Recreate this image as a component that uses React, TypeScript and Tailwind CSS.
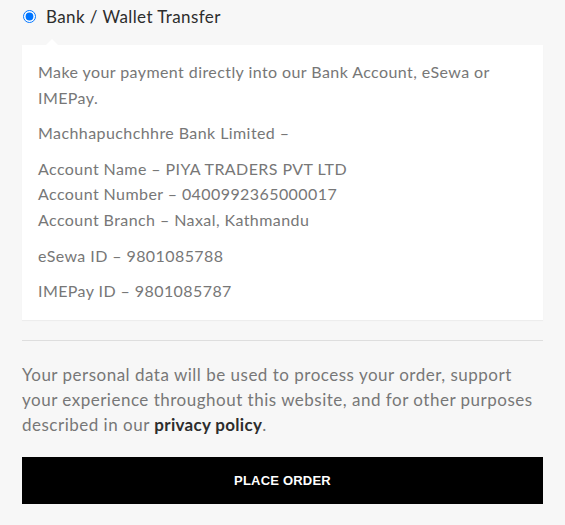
import React from "react";

export default function App() {
  return (
    <div className="min-h-[525px] w-full bg-[#f7f7f7] px-[22px] pt-[6px] pb-[20px] font-['Lato',sans-serif]">
      <label className="flex items-center h-[21px]">
        <input type="radio" defaultChecked className="ml-[1px] w-[13px] h-[13px] accent-[#0075ff] m-0" />
        <span className="ml-[10px] text-[17px] tracking-[0.4px] text-[#2d2d2d]">Bank / Wallet Transfer</span>
      </label>
      <div className="relative mt-[18px] bg-white px-[16px] pt-[14px] pb-[16px] text-[16px] tracking-[0.42px] leading-[25.6px] text-[#777777] shadow-[0_1px_1px_rgba(0,0,0,0.04)]">
        <div className="absolute left-[24px] top-[-6px] w-0 h-0 border-l-[6px] border-r-[6px] border-b-[6px] border-l-transparent border-r-transparent border-b-white" />
        <p className="mb-[10px]">Make your payment directly into our Bank Account, eSewa or IMEPay.</p>
        <p className="mb-[10px]">Machhapuchchhre Bank Limited –</p>
        <p className="mb-[10px]">
          Account Name – PIYA TRADERS PVT LTD
          <br />
          Account Number – 0400992365000017
          <br />
          Account Branch – Naxal, Kathmandu
        </p>
        <p className="mb-[10px]">eSewa ID – 9801085788</p>
        <p>IMEPay ID – 9801085787</p>
      </div>
      <div className="mt-[20px] h-[1px] bg-[#dedede]" />
      <p className="mt-[21px] text-[17px] tracking-[0.5px] leading-[25px] text-[#777777]">
        Your personal data will be used to process your order, support your experience throughout this website, and for other purposes described in our{" "}
        <a className="font-bold tracking-[0.3px] text-[#2d2d2d]">privacy policy</a>.
      </p>
      <button className="mt-[20px] w-full h-[47px] bg-black text-white text-[13px] font-bold font-['Liberation_Sans',sans-serif] tracking-[0.2px]">
        PLACE ORDER
      </button>
    </div>
  );
}
